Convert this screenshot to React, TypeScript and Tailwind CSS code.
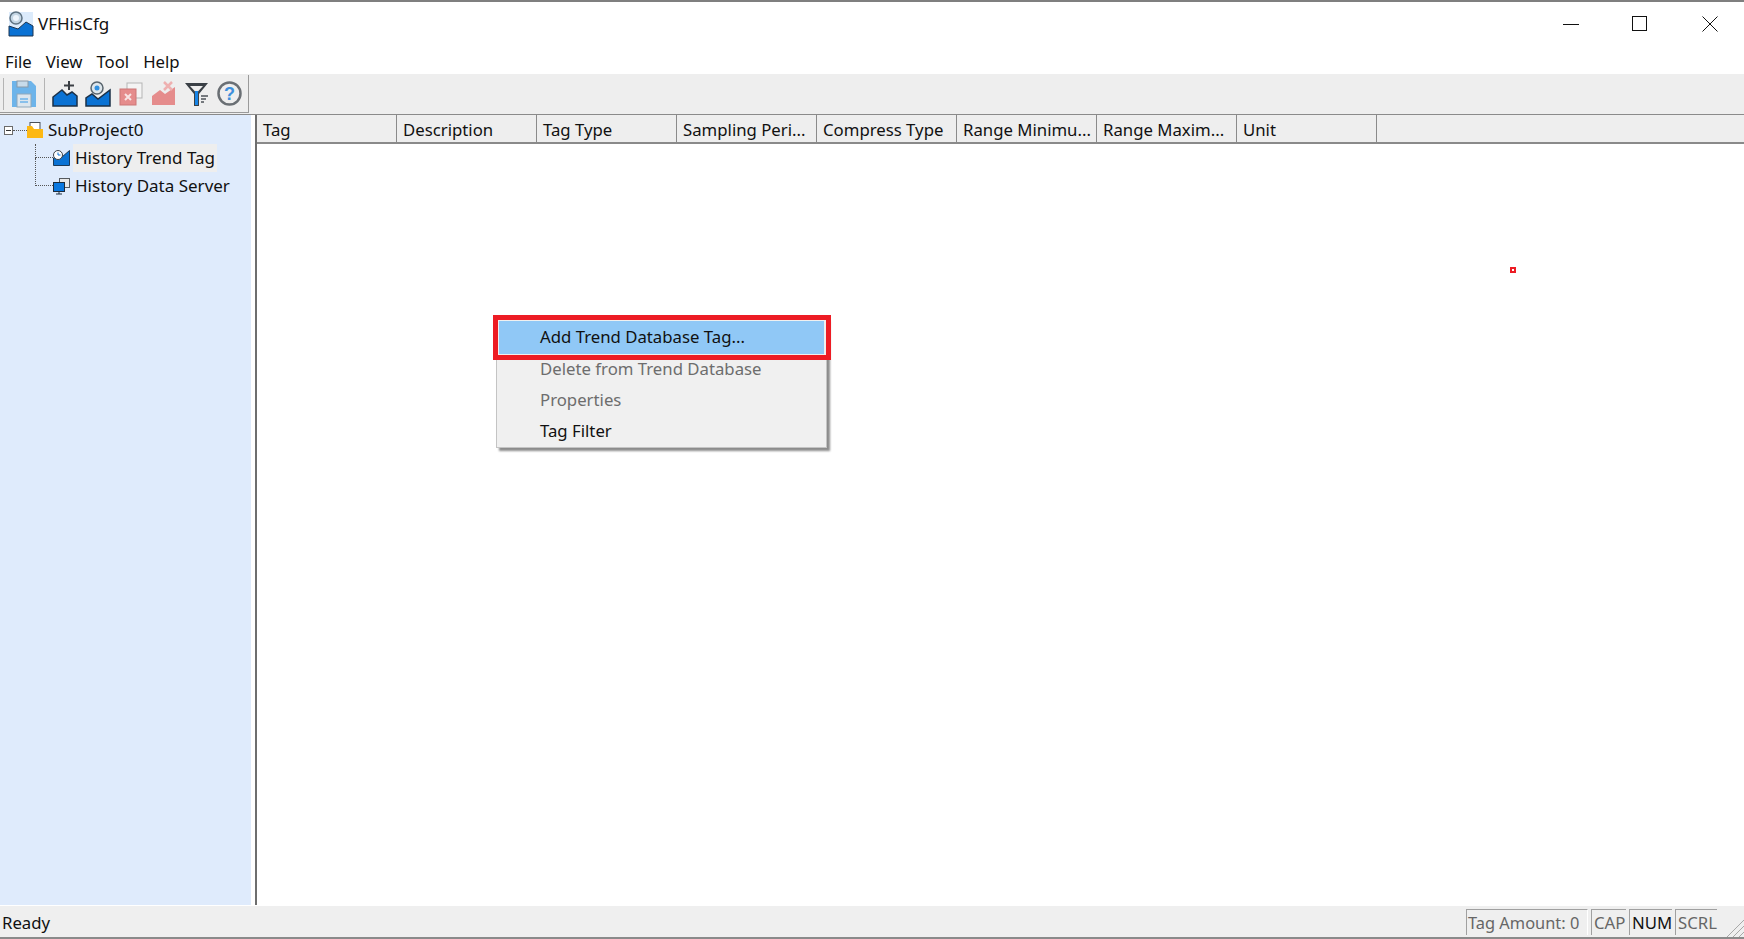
const columns = [
  "Tag",
  "Description",
  "Tag Type",
  "Sampling Peri...",
  "Compress Type",
  "Range Minimu...",
  "Range Maxim...",
  "Unit",
];

const AppIcon = () => (
  <svg width="26" height="26" viewBox="0 0 26 26">
    <rect x="1" y="1" width="24" height="24" fill="#dcebfb" />
    <path d="M1 25 V15 L10 18 L18 11 L25 15 V25 Z" fill="#0a72d4" stroke="#1c3550" strokeWidth="1" />
    <circle cx="8" cy="7" r="6" fill="#c4d6e4" stroke="#5f7382" strokeWidth="1.5" />
    <circle cx="8" cy="7" r="3" fill="#eef5fb" />
  </svg>
);

const SaveIcon = () => (
  <svg width="26" height="28" viewBox="0 0 26 28">
    <path d="M1 1 H20 L25 6 V27 H1 Z" fill="#6db4ea" />
    <rect x="6" y="1" width="11" height="6" fill="#c7dbea" stroke="#8a9aa8" />
    <rect x="6" y="14" width="14" height="13" fill="#dce6ee" stroke="#8fa8bb" />
    <path d="M9 19 H17 M9 22 H17" stroke="#6db4ea" strokeWidth="1.5" />
  </svg>
);

const AddTagIcon = () => (
  <svg width="26" height="26" viewBox="0 0 26 26">
    <path d="M1 25 V16 L10 9 L15 14 L20 11 L25 15 V25 Z" fill="#0a72d4" stroke="#1b3047" strokeWidth="1.5" />
    <path d="M17 0 V9 M12 4.500 H22" stroke="#3a3f44" strokeWidth="2" fill="none" />
  </svg>
);

const ViewTagIcon = () => (
  <svg width="26" height="26" viewBox="0 0 26 26">
    <path d="M1 25 V17 L7 13 L13 18 L25 9 V25 Z" fill="#0a72d4" stroke="#1b3047" strokeWidth="1.5" />
    <circle cx="12" cy="7" r="6" fill="#dde6ec" stroke="#59656e" strokeWidth="1.500" />
    <circle cx="12" cy="7" r="2.500" fill="#3190e0" />
  </svg>
);

const DeleteAllIcon = () => (
  <svg width="24" height="24" viewBox="0 0 24 24">
    <rect x="8" y="1" width="15" height="15" fill="#f4f4f4" stroke="#b5b5b5" />
    <rect x="1" y="7" width="16" height="16" fill="#e58c8c" stroke="#c77" />
    <path d="M6 12 L12 18 M12 12 L6 18" stroke="#f8e4e4" strokeWidth="2" />
  </svg>
);

const DeleteTagIcon = () => (
  <svg width="25" height="25" viewBox="0 0 25 25">
    <path d="M1 24 V15 L9 9 L14 13 L24 6 V24 Z" fill="#e58c8c" />
    <path d="M13 1 L21 9 M21 1 L13 9" stroke="#eeb0b0" strokeWidth="2.500" />
  </svg>
);

const FilterIcon = () => (
  <svg width="25" height="26" viewBox="0 0 25 26">
    <path d="M1 2 H24 L15 13 V25 H10 V13 Z" fill="#3a4046" />
    <path d="M6 5 H19 L13.500 11 H11.500 Z" fill="#eeeeee" />
    <path d="M11 10 H14 V24 H11 Z" fill="#1784e6" />
    <path d="M17 15 H24 M17 18 H22 M17 21 H20" stroke="#4d5359" strokeWidth="1.500" />
  </svg>
);

const HelpIcon = () => (
  <svg width="25" height="25" viewBox="0 0 25 25">
    <circle cx="12.500" cy="12.500" r="11" fill="#eeeeee" stroke="#6a6f74" strokeWidth="2.500" />
    <text
      x="12.500"
      y="19"
      textAnchor="middle"
      fontSize="18"
      fontWeight="700"
      fontFamily="Liberation Sans, sans-serif"
      fill="#3d8fdc">
      ?
    </text>
  </svg>
);

const FolderIcon = () => (
  <svg width="17" height="17" viewBox="0 0 17 17">
    <rect x="3" y="0.500" width="10" height="8" fill="#fff" stroke="#4a5058" />
    <path d="M0 4 H5 L7 7 H16 V16 H0 Z" fill="#fdb813" />
  </svg>
);

const TrendTagIcon = () => (
  <svg width="17" height="16" viewBox="0 0 17 16">
    <path d="M0.500 15.500 V8 L9 7 L16.500 0.500 V15.500 Z" fill="#0a72d4" stroke="#1d3a57" />
    <circle cx="5" cy="5" r="4.500" fill="#fff" stroke="#3c4248" />
    <path d="M5 2.500 V5 H7.500" stroke="#0a72d4" fill="none" />
  </svg>
);

const ServerIcon = () => (
  <svg width="17" height="17" viewBox="0 0 17 17">
    <rect x="6.500" y="0.500" width="10" height="9" fill="#e8e8e8" stroke="#55595e" />
    <rect x="0.500" y="4.500" width="11" height="9" fill="#0a78e0" stroke="#1c2c3c" />
    <path d="M3 16 H9 M6 14 V16" stroke="#1c2c3c" />
  </svg>
);

const ToolbarGap = () => <div className="w-px h-[32px] bg-[#b4b4b4]" />;

const ToolSlot = ({ children }: { children: React.ReactNode }) => (
  <div className="w-[33px] flex items-center justify-center">{children}</div>
);

export default function App() {
  return (
    <div
      className="relative flex flex-col w-[1744px] h-[939px] overflow-hidden bg-white text-[#111] text-[16.75px] border-t-2 border-[#7f7f7f]"
      style={{ fontFamily: '"Noto Sans", "Open Sans", sans-serif' }}>
      {/* title bar */}
      <div className="flex items-center h-[44px] pl-[8px]">
        <AppIcon />
        <span className="ml-[4px] text-[17px]">VFHisCfg</span>
        <div className="ml-auto flex items-center text-black">
          <svg width="16" height="16" viewBox="0 0 16 16" className="mr-[53px]">
            <path d="M0 8.500 H16" stroke="#111" />
          </svg>
          <svg width="16" height="16" viewBox="0 0 16 16" className="mr-[54px]">
            <rect x="0.500" y="0.500" width="14" height="14" fill="none" stroke="#111" />
          </svg>
          <svg width="16" height="16" viewBox="0 0 16 16" className="mr-[26px]">
            <path d="M0.500 0.500 L15.500 15.500 M15.500 0.500 L0.500 15.500" stroke="#111" />
          </svg>
        </div>
      </div>

      {/* menu */}
      <div className="flex items-center h-[28px] pt-[4px] pl-[5px] gap-[14px]">
        <span>File</span>
        <span>View</span>
        <span>Tool</span>
        <span>Help</span>
      </div>

      {/* toolbar */}
      <div className="flex h-[40px] bg-[#eeeeee]">
        <div className="flex items-center w-[249px] h-[38px] mt-px pl-[3px] border-r border-b border-[#9a9a9a]">
          <ToolbarGap />
          <div className="ml-[7px] flex items-center">
            <SaveIcon />
          </div>
          <div className="ml-[7px]">
            <ToolbarGap />
          </div>
          <div className="ml-[3px] flex items-center">
            <ToolSlot>
              <AddTagIcon />
            </ToolSlot>
            <ToolSlot>
              <ViewTagIcon />
            </ToolSlot>
            <ToolSlot>
              <DeleteAllIcon />
            </ToolSlot>
            <ToolSlot>
              <DeleteTagIcon />
            </ToolSlot>
            <ToolSlot>
              <FilterIcon />
            </ToolSlot>
            <ToolSlot>
              <HelpIcon />
            </ToolSlot>
          </div>
        </div>
      </div>
      <div className="h-px bg-[#8a8a8a]" />

      {/* main */}
      <div className="flex flex-1 min-h-0">
        <div className="w-[251px] bg-[#dfebfc] pt-px text-[17px]">
          <div className="flex items-center h-[28px] pl-[4px]">
            <div className="w-[9px] h-[9px] border border-[#6b6b6b] bg-white flex items-center justify-center">
              <div className="w-[5px] h-px bg-[#333]" />
            </div>
            <div className="w-[14px] border-t border-dotted border-[#555]" />
            <FolderIcon />
            <span className="ml-[4px]">SubProject0</span>
          </div>
          <div className="relative pl-[35px]">
            <div className="absolute left-[35px] top-0 h-[14px] w-[18px] border-l border-b border-dotted border-[#555]" />
            <div className="absolute left-[35px] top-[14px] h-[28px] w-[18px] border-l border-b border-dotted border-[#555]" />
            <div className="flex items-center h-[28px] pl-[18px]">
              <TrendTagIcon />
              <span className="ml-[3px] px-[2px] bg-[#eeeeee] leading-[28px]">History Trend Tag</span>
            </div>
            <div className="flex items-center h-[28px] pl-[18px]">
              <ServerIcon />
              <span className="ml-[3px] px-[2px]">History Data Server</span>
            </div>
          </div>
        </div>
        <div className="w-[4px] bg-white" />
        <div className="flex-1 flex flex-col border-l-2 border-[#6e6e6e]">
          <div className="flex h-[29px] bg-[#eeeeee] border-b-2 border-[#8a8a8a]">
            {columns.map((col) => (
              <div
                key={col}
                className="w-[140px] shrink-0 pl-[6px] leading-[29px] whitespace-nowrap border-r border-[#8a8a8a]">
                {col}
              </div>
            ))}
          </div>
          <div className="flex-1 bg-white" />
        </div>
      </div>

      {/* status bar */}
      <div className="flex items-center h-[34px] pt-[3px] bg-[#efefef] border-t border-white border-b-2 border-b-[#8a8a8a] pl-[2px]">
        <span>Ready</span>
        <div className="ml-auto mb-[2px] flex items-center gap-[3px] text-[#666]">
          <div className="w-[122px] h-[26px] pl-[1px] leading-[26px] text-[16.4px] border-l border-t border-[#a0a0a0] border-r border-r-white">
            Tag Amount: 0
          </div>
          <div className="w-[35px] h-[26px] pl-[2px] leading-[26px] border-l border-t border-[#a0a0a0]">CAP</div>
          <div className="w-[43px] h-[26px] pl-[2px] leading-[26px] border-l border-t border-[#a0a0a0] text-[#111]">
            NUM
          </div>
          <div className="w-[42px] h-[26px] pl-[2px] leading-[26px] border-l border-t border-[#a0a0a0]">SCRL</div>
        </div>
        <svg width="17" height="17" viewBox="0 0 17 17" className="ml-[10px] self-end">
          <path d="M0 17 L17 0 M6 17 L17 6 M12 17 L17 12" stroke="#a8a8a8" fill="none" />
        </svg>
      </div>

      {/* context menu */}
      <div className="absolute left-[496px] top-[316px] w-[331px] h-[130px] bg-[#f0f0f0] border border-[#c4c4c4] shadow-[3px_3px_2px_rgba(0,0,0,0.45)] pt-[2px]">
        <div className="h-[33px] mx-[2px] bg-[#90c8f6] pl-[41px] leading-[32px]">Add Trend Database Tag...</div>
        <div className="h-[31px] pl-[43px] leading-[29px] text-[#6d6d6d]">Delete from Trend Database</div>
        <div className="h-[31px] pl-[43px] leading-[29px] text-[#6d6d6d]">Properties</div>
        <div className="h-[31px] pl-[43px] leading-[29px]">Tag Filter</div>
      </div>
      <div className="absolute left-[493px] top-[313px] w-[338px] h-[45px] border-[5px] border-[#ed1c24]" />
      <div className="absolute left-[1510px] top-[265px] w-[6px] h-[6px] border-2 border-[#ed1c24] bg-white" />
    </div>
  );
}
